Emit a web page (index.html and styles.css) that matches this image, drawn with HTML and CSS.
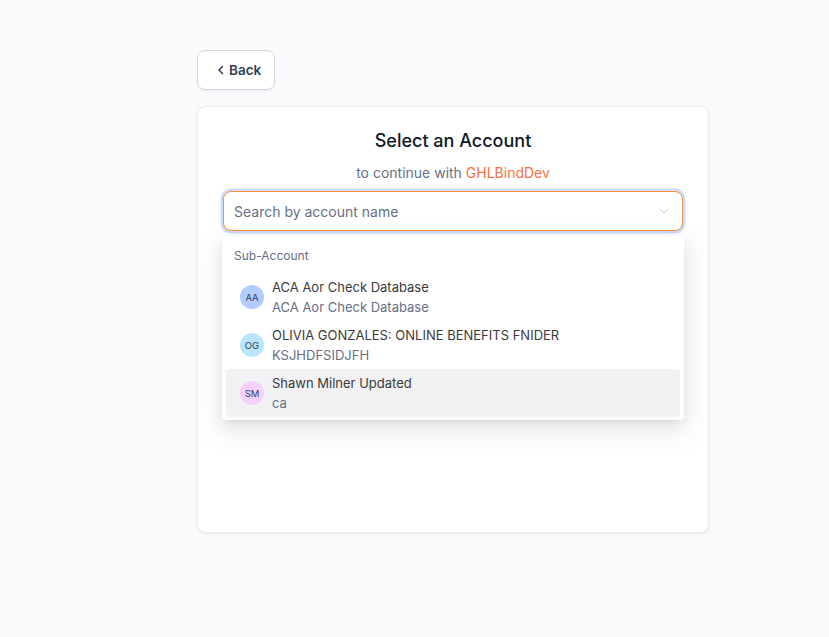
FILE: index.html
```html
<!DOCTYPE html>
<html lang="en">
<head>
<meta charset="utf-8">
<title>Select an Account</title>
<link rel="stylesheet" href="styles.css">
</head>
<body>
<main class="page">
  <button class="back-btn" type="button">
    <svg class="back-icon" width="8" height="10" viewBox="0 0 8 10" aria-hidden="true"><path d="M5.5 1.5 L2 5 L5.5 8.5" fill="none" stroke="#344054" stroke-width="1.6" stroke-linecap="round" stroke-linejoin="round"/></svg>
    <span>Back</span>
  </button>
  <section class="card">
    <h1 class="title">Select an Account</h1>
    <p class="subtitle">to continue with <span class="brand">GHLBindDev</span></p>
    <div class="select">
      <div class="select-input">
        <span class="placeholder">Search by account name</span>
        <svg class="chevron" width="10" height="6" viewBox="0 0 10 6" aria-hidden="true"><path d="M0.8 0.8 L5 5 L9.2 0.8" fill="none" stroke="#c4c4c4" stroke-width="1"/></svg>
      </div>
      <div class="dropdown">
        <div class="group-label">Sub-Account</div>
        <div class="option">
          <span class="avatar av-blue">AA</span>
          <span class="option-text"><span class="opt-name">ACA Aor Check Database</span><span class="opt-sub">ACA Aor Check Database</span></span>
        </div>
        <div class="option">
          <span class="avatar av-sky">OG</span>
          <span class="option-text"><span class="opt-name">OLIVIA GONZALES: ONLINE BENEFITS FNIDER</span><span class="opt-sub">KSJHDFSIDJFH</span></span>
        </div>
        <div class="option option-hover">
          <span class="avatar av-pink">SM</span>
          <span class="option-text"><span class="opt-name">Shawn Milner Updated</span><span class="opt-sub">ca</span></span>
        </div>
      </div>
    </div>
  </section>
</main>
</body>
</html>
```
FILE: styles.css
```css
* { box-sizing: border-box; }
html, body { margin: 0; padding: 0; }
body {
  background: #f9fafb;
  font-family: Inter, "Noto Sans", "Liberation Sans", sans-serif;
  color: #344054;
  width: 829px;
  height: 637px;
  overflow: hidden;
}
.page {
  padding: 50px 0 0 197px;
  display: flex;
  flex-direction: column;
  align-items: flex-start;
}
.back-btn {
  display: flex;
  align-items: center;
  gap: 4px;
  height: 40px;
  width: 78px;
  padding: 0 0 0 19px;
  background: #fff;
  border: 1px solid #d0d5dd;
  border-radius: 8px;
  font-family: inherit;
  font-size: 13.5px;
  font-weight: 600;
  color: #344054;
  box-shadow: 0 1px 2px rgba(16,24,40,0.05);
}
.back-icon { display: block; }
.card {
  margin-top: 16px;
  width: 512px;
  height: 427px;
  background: #fff;
  border: 1px solid #eaecf0;
  border-radius: 8px;
  box-shadow: 0 1px 2px rgba(16,24,40,0.08);
  padding: 20px 25px 0 25px;
}
.title {
  margin: 0;
  text-align: center;
  font-size: 18px;
  line-height: 28px;
  font-weight: 500;
  color: #101828;
}
.subtitle {
  margin: 8px 0 0;
  text-align: center;
  font-size: 14px;
  line-height: 20px;
  color: #667085;
}
.brand { color: #f97042; }
.select {
  position: relative;
  margin-top: 8px;
}
.select-input {
  height: 40px;
  border: 1px solid #f7903a;
  border-radius: 8px;
  background: #fff;
  box-shadow: 0 0 0 2.5px #cfddfa;
  display: flex;
  align-items: center;
  justify-content: space-between;
  padding: 0 13px 0 10px;
}
.placeholder {
  font-size: 14px;
  color: #667085;
}
.chevron { display: block; }
.dropdown {
  position: absolute;
  top: 45px;
  left: -1px;
  right: -1px;
  background: #fff;
  border-radius: 4px;
  padding: 10px 4px 3px;
  box-shadow: 0 3px 6px -4px rgba(0,0,0,0.12), 0 6px 16px 0 rgba(0,0,0,0.08), 0 9px 28px 8px rgba(0,0,0,0.05);
}
.group-label {
  padding-left: 8px;
  font-size: 12px;
  line-height: 20px;
  color: #667085;
  margin-bottom: 7px;
}
.option {
  display: flex;
  align-items: center;
  gap: 8px;
  height: 48px;
  padding: 0 14px;
  border-radius: 4px;
}
.option-hover { background: #f2f2f4; }
.avatar {
  width: 24px;
  height: 24px;
  border-radius: 50%;
  flex: none;
  display: flex;
  align-items: center;
  justify-content: center;
  font-size: 9.5px;
  color: #344054;
}
.av-blue { background: #b2ccff; }
.av-sky { background: #b9e6fe; }
.av-pink { background: #f6d0fe; }
.option-text {
  display: flex;
  flex-direction: column;
}
.opt-name {
  font-size: 13px;
  line-height: 20px;
  color: #3b3b3b;
}
.opt-sub {
  font-size: 13px;
  line-height: 20px;
  color: #667085;
}
```
